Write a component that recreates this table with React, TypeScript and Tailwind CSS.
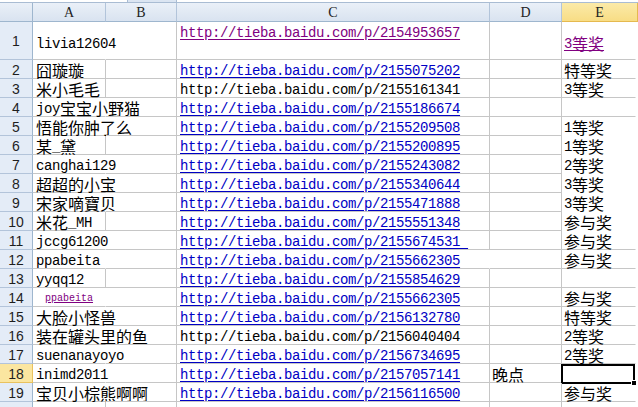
import React from "react";

type Kind = "link" | "visited" | "plain";
type Txt = { t: string; k?: Kind };
type Row = {
  n: number;
  a?: Txt;
  c?: Txt;
  d?: string;
  e?: Txt;
  abHidden?: boolean;
  cdHidden?: boolean;
  eNoBottom?: boolean;
};

const U = "http://tieba.baidu.com/p/";

const rows: Row[] = [
  { n: 1, a: { t: "livia12604" }, c: { t: U + "2154953657", k: "visited" }, e: { t: "3等奖", k: "visited" }, abHidden: true },
  { n: 2, a: { t: "囧璇璇" }, c: { t: U + "2155075202", k: "link" }, e: { t: "特等奖" } },
  { n: 3, a: { t: "米小毛毛" }, c: { t: U + "2155161341", k: "plain" }, e: { t: "3等奖" } },
  { n: 4, a: { t: "joy宝宝小野猫" }, c: { t: U + "2155186674", k: "link" }, abHidden: true },
  { n: 5, a: { t: "悟能你肿了么" }, c: { t: U + "2155209508", k: "link" }, e: { t: "1等奖" }, abHidden: true, eNoBottom: true },
  { n: 6, a: { t: "某_黛" }, c: { t: U + "2155200895", k: "link" }, e: { t: "1等奖" }, eNoBottom: true },
  { n: 7, a: { t: "canghai129" }, c: { t: U + "2155243082", k: "link" }, e: { t: "2等奖" }, abHidden: true, eNoBottom: true },
  { n: 8, a: { t: "超超的小宝" }, c: { t: U + "2155340644", k: "link" }, e: { t: "3等奖" }, abHidden: true, eNoBottom: true },
  { n: 9, a: { t: "宋家嘀寶贝" }, c: { t: U + "2155471888", k: "link" }, e: { t: "3等奖" }, abHidden: true, eNoBottom: true },
  { n: 10, a: { t: "米花_MH" }, c: { t: U + "2155551348", k: "link" }, e: { t: "参与奖" }, eNoBottom: true },
  { n: 11, a: { t: "jccg61200" }, c: { t: U + "2155674531 ", k: "link" }, e: { t: "参与奖" }, abHidden: true },
  { n: 12, a: { t: "ppabeita" }, c: { t: U + "2155662305", k: "link" }, e: { t: "参与奖" }, abHidden: true, cdHidden: true },
  { n: 13, a: { t: "yyqq12" }, c: { t: U + "2155854629", k: "link" } },
  { n: 14, c: { t: U + "2155662305", k: "link" }, e: { t: "参与奖" }, abHidden: true },
  { n: 15, a: { t: "大脸小怪兽" }, c: { t: U + "2156132780", k: "link" }, e: { t: "特等奖" }, abHidden: true },
  { n: 16, a: { t: "装在罐头里的鱼" }, c: { t: U + "2156040404", k: "plain" }, e: { t: "2等奖" }, abHidden: true },
  { n: 17, a: { t: "suenanayoyo" }, c: { t: U + "2156734695", k: "link" }, e: { t: "2等奖" }, abHidden: true },
  { n: 18, a: { t: "inimd2011" }, c: { t: U + "2157057141", k: "link" }, d: "晚点", abHidden: true },
  { n: 19, a: { t: "宝贝小棕熊啊啊" }, c: { t: U + "2156116500", k: "link" }, e: { t: "参与奖" }, abHidden: true },
  { n: 20 },
];

const CJK = /([\u2E80-\u9FFF\uFF00-\uFFEF]+)/;

function Runs({ text }: { text: string }) {
  const parts = text.split(CJK);
  return (
    <>
      {parts.map((p, i) =>
        p === "" ? null : CJK.test(p) ? (
          <span key={i} className="font-['Noto_Sans_CJK_SC',sans-serif] text-[16px] tracking-normal align-[-2px]">
            {p}
          </span>
        ) : (
          <span key={i}>{p}</span>
        )
      )}
    </>
  );
}

function kindClass(k?: Kind) {
  if (k === "link") return "text-[#0000c4] underline decoration-1 underline-offset-2";
  if (k === "visited") return "text-[#800080] underline decoration-1 underline-offset-2";
  return "text-black";
}

function CellText({ txt, pad }: { txt?: Txt; pad: string }) {
  if (!txt) return null;
  return (
    <div
      className={`whitespace-pre font-['Liberation_Mono',monospace] text-[14px] tracking-[-0.4px] leading-[13px] ${pad} ${kindClass(txt.k)}`}
    >
      <Runs text={txt.t} />
    </div>
  );
}

function Cell({
  w,
  hideR,
  hideB,
  children,
}: {
  w: string;
  hideR?: boolean;
  hideB?: boolean;
  children?: React.ReactNode;
}) {
  return (
    <div
      className={`relative shrink-0 h-full flex items-end border-r border-b ${w} ${
        hideR ? "border-r-transparent" : "border-r-[#c6c6c6]"
      } ${hideB ? "border-b-transparent" : "border-b-[#c6c6c6]"}`}
    >
      {children}
    </div>
  );
}

function RowHead({ n }: { n: number }) {
  const sel = n === 18;
  return (
    <div
      className={`shrink-0 w-[33px] h-full flex items-center justify-center pt-[2px] border-r border-b font-['Liberation_Sans',sans-serif] text-[14px] text-[#1e1e1e] ${
        sel
          ? "bg-[#fbe6a0] border-r-[#e9c25f] border-b-[#e9c25f]"
          : "bg-[#e4ecf7] border-r-[#9eb6ce] border-b-[#b3c4da]"
      }`}
    >
      {n < 20 ? n : null}
    </div>
  );
}

function DataRow({ r }: { r: Row }) {
  const tall = r.n === 1;
  const padA = tall ? "pl-[3px] pb-[8px]" : "pl-[3px]";
  const padC = tall ? "pl-[3px] pb-[19px]" : "pl-[3px]";
  const padE = tall ? "pl-[2px] pb-[8px]" : "pl-[2px]";
  return (
    <div className={`flex shrink-0 ${tall ? "h-[38px]" : "h-[19px]"}`}>
      <RowHead n={r.n} />
      <Cell w="w-[73px]" hideR={r.abHidden}>
        {r.n === 14 ? (
          <div className="whitespace-pre pl-[12px] pb-[2px] font-['Liberation_Mono',monospace] text-[10px] leading-[10px] text-[#800080] underline decoration-1 underline-offset-1">
            ppabeita
          </div>
        ) : (
          <CellText txt={r.a} pad={padA} />
        )}
      </Cell>
      <Cell w="w-[71px]" />
      <Cell w="w-[313px]" hideR={r.cdHidden}>
        <CellText txt={r.c} pad={padC} />
      </Cell>
      <Cell w="w-[72px]">
        {r.d ? <CellText txt={{ t: r.d }} pad="pl-[2px]" /> : null}
      </Cell>
      <Cell w="w-[74px]" hideR hideB={r.eNoBottom}>
        <CellText txt={r.e} pad={padE} />
        {r.n === 18 ? (
          <>
            <div className="absolute left-[-1px] top-[0px] w-[74px] h-[20px] border-2 border-black" />
            <div className="absolute left-[69px] top-[16px] w-[6px] h-[6px] bg-black border border-white" />
          </>
        ) : null}
      </Cell>
      <div className="flex-1 h-full" />
    </div>
  );
}

function ColHead({ w, label, sel }: { w: string; label: string; sel?: boolean }) {
  return (
    <div
      className={`${w} h-full flex items-center justify-center border-r border-b font-['Liberation_Serif',serif] text-[14px] text-[#222] ${
        sel
          ? "bg-linear-to-b from-[#fbeaa8] to-[#f8dd85] border-b-[#e5b94f] border-r-[#e5b94f]"
          : "bg-linear-to-b from-[#eaf0f8] to-[#d9e3f0] border-b-[#9eb6ce] border-r-[#b2c4da]"
      }`}
    >
      {label}
    </div>
  );
}

export default function App() {
  return (
    <div className="w-[638px] h-[407px] overflow-hidden bg-white flex flex-col">
      <div className="h-[3px] shrink-0 flex border-b border-b-[#a9bcd3]">
        <div className="ml-[127px] w-[50px] h-full bg-[#dbe5f2] border-x border-[#a9bcd3]" />
      </div>
      <div className="h-[19px] shrink-0 flex">
        <div className="w-[33px] shrink-0 h-full bg-linear-to-b from-[#eaf0f8] to-[#d9e3f0] border-r border-b border-[#9eb6ce]" />
        <ColHead w="w-[73px] shrink-0" label="A" />
        <ColHead w="w-[71px] shrink-0" label="B" />
        <ColHead w="w-[313px] shrink-0" label="C" />
        <ColHead w="w-[72px] shrink-0" label="D" />
        <ColHead w="flex-1" label="E" sel />
      </div>
      {rows.map((r) => (
        <DataRow key={r.n} r={r} />
      ))}
    </div>
  );
}
